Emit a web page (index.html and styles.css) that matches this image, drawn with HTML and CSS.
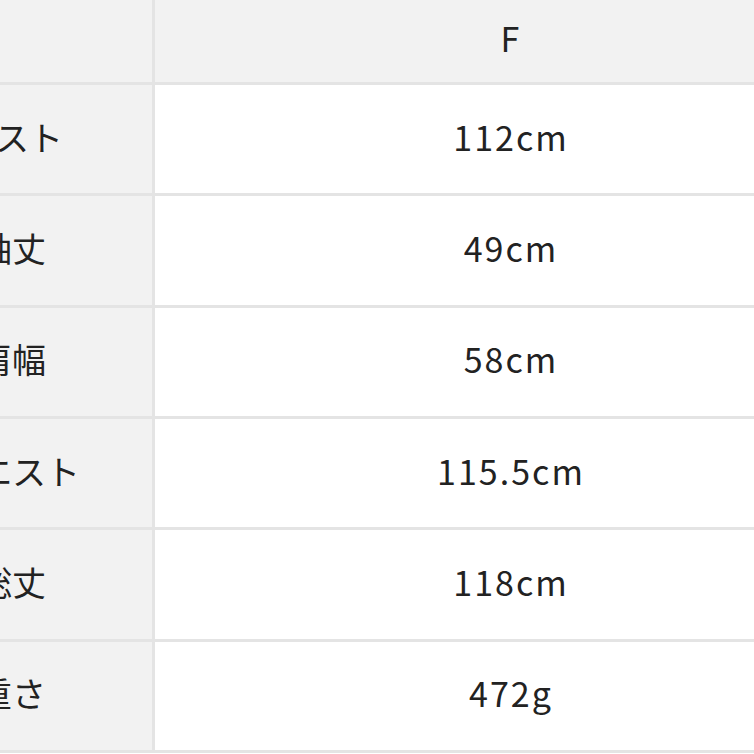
FILE: index.html
```html
<!DOCTYPE html>
<html lang="ja">
<head>
<meta charset="utf-8">
<title>サイズ表</title>
<link rel="stylesheet" href="styles.css">
</head>
<body>
<div class="viewport">
  <div class="size-table">
    <div class="cell head label"></div>
    <div class="cell head value">F</div>
    <div class="cell label">バスト</div>
    <div class="cell value">112cm</div>
    <div class="cell label">袖丈</div>
    <div class="cell value">49cm</div>
    <div class="cell label">肩幅</div>
    <div class="cell value">58cm</div>
    <div class="cell label">ウエスト</div>
    <div class="cell value">115.5cm</div>
    <div class="cell label">総丈</div>
    <div class="cell value">118cm</div>
    <div class="cell label">重さ</div>
    <div class="cell value">472g</div>
  </div>
</div>
</body>
</html>
```

FILE: styles.css
```css
html, body {
  margin: 0;
  padding: 0;
  background: #ffffff;
}
.viewport {
  width: 754px;
  height: 754px;
  overflow: hidden;
}
.size-table {
  margin-left: -128px;
  width: 993px;
  display: grid;
  grid-template-columns: 280px 710px;
  grid-template-rows: 82px repeat(6, 108.33px);
  gap: 3px;
  padding-bottom: 3px;
  background: #e4e4e4;
  font-family: "Noto Sans CJK JP", "Noto Sans", sans-serif;
  font-size: 34px;
  color: #222222;
}
.cell {
  display: flex;
  align-items: center;
  justify-content: center;
  padding-bottom: 6px;
  box-sizing: border-box;
  background: #ffffff;
}
.value {
  letter-spacing: 2px;
  padding-left: 2px;
}
.label, .head {
  background: #f2f2f2;
}
.head {
  padding-bottom: 8px;
}
```
